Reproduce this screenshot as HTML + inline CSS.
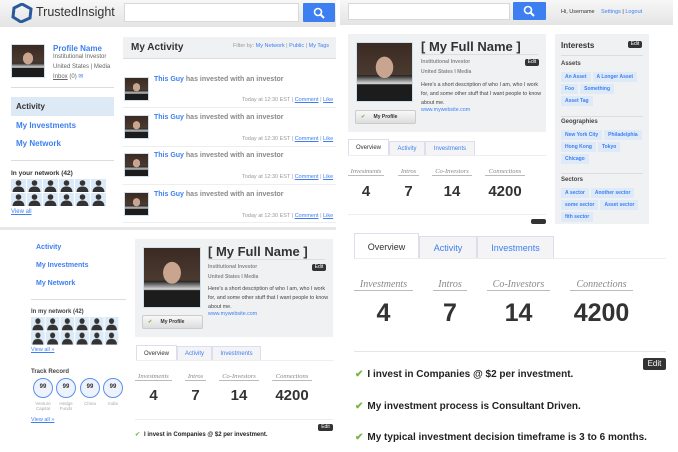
<!DOCTYPE html><html><head><meta charset="utf-8"><style>
*{margin:0;padding:0;box-sizing:border-box}
body{width:678px;height:452px;background:#fff;position:relative;overflow:hidden;font-family:"Liberation Sans",Arial,sans-serif;font-size:7px;color:#666}
.a{position:absolute;white-space:nowrap}
.hdr{background:linear-gradient(#f7f7f7,#e4e4e4)}
.inp{background:#fff;border:1px solid #d8d8d8}
.btn{background:#3d7ff0;border-radius:1px}
.lk{color:#3d7ff0}
.b{font-weight:bold}
.ph{background:radial-gradient(ellipse at 50% 42%,#c9a48e 0 22%,transparent 23%),linear-gradient(180deg,#3a2a22 0,#4a3a30 55%,#222 56%,#ddd 70%,#1c1c1c 72%);border:1px solid #cfe0ef}
.card{background:#f0f1f3}
.line{position:absolute;height:1px;background:#ddd}
.edit{position:absolute;background:#333;color:#fff;font-size:5px;border-radius:2px;text-align:center}
.tag{display:inline-block;background:#dfeaf8;color:#3d7ff0;font-weight:bold;font-size:5px;padding:2px 4px;margin:0 2px 2px 0;height:10px}
.tab{position:absolute;border:1px solid #dde;border-bottom:none;background:#f4f4f6;color:#3d7ff0;text-align:center}
.tab.on{background:#fff;color:#333}
.sl{font-family:"Liberation Serif",serif;font-style:italic;color:#888;border-bottom:1px solid #bbb;text-align:center}
.num{font-weight:bold;color:#333;text-align:center}
.mp{position:absolute;background:linear-gradient(#f8f8f8,#ddd);border:1px solid #ccc;border-radius:2px;font-size:5px;font-weight:bold;color:#333;text-align:center}
.mp:before{content:"✔";color:#7ab648;position:absolute;left:5px}
.ck{color:#7ab648;margin-right:4px}
</style></head><body>
<svg width="0" height="0" style="position:absolute"><defs><pattern id="s" width="16" height="14" patternUnits="userSpaceOnUse"><rect width="15" height="13" fill="#dceaf7"/><circle cx="7.5" cy="4" r="2.8" fill="#333"/><path d="M1.5 13 Q2 7.5 7.5 7.5 Q13 7.5 13.5 13Z" fill="#333"/></pattern></defs></svg>

<!-- TOP LEFT -->
<div class="a hdr" style="left:0;top:0;width:336px;height:27px"></div>
<svg class="a" style="left:11px;top:3px" width="22" height="20"><path d="M11 1 L20 6 L19 15 L10 19 L2 14 L3 5Z" fill="none" stroke="#2a5a9c" stroke-width="3"/></svg>
<div class="a" style="left:36px;top:5px;font-size:12.5px;color:#333">TrustedInsight</div>
<div class="a inp" style="left:124px;top:3px;width:175px;height:19px"></div>
<div class="a btn" style="left:303px;top:3px;width:32px;height:19px"></div>
<svg class="a" style="left:313px;top:7px" width="12" height="12"><circle cx="5" cy="5" r="3.5" stroke="#fff" stroke-width="1.6" fill="none"/><path d="M7.5 7.5L11 11" stroke="#fff" stroke-width="2"/></svg>
<div class="a ph" style="left:11px;top:44px;width:34px;height:34px"></div>
<div class="a lk b" style="left:53px;top:44px;font-size:8px">Profile Name</div>
<div class="a" style="left:53px;top:54px;font-size:6px">Institutional Investor</div>
<div class="a" style="left:53px;top:64px;font-size:6px">United States | Media</div>
<div class="a" style="left:53px;top:73px;font-size:6px"><u>Inbox</u> (0) <span class="lk">✉</span></div>
<div class="line" style="left:11px;top:87px;width:103px"></div>
<div class="a" style="left:11px;top:97px;width:103px;height:19px;background:#dde9f5"></div>
<div class="a b" style="left:16px;top:102px;font-size:8px;color:#333">Activity</div>
<div class="a b lk" style="left:16px;top:121px;font-size:8px">My Investments</div>
<div class="a b lk" style="left:16px;top:139px;font-size:8px">My Network</div>
<div class="line" style="left:11px;top:160px;width:103px"></div>
<div class="a b" style="left:11px;top:170px;font-size:6.5px;color:#333">In your network (42)</div>
<svg class="a" style="left:11px;top:179px" width="96" height="28"><rect width="96" height="28" fill="url(#s)"/></svg>
<div class="a lk" style="left:11px;top:209px;font-size:6px"><u>View all</u></div>
<div class="a card" style="left:123px;top:37px;width:213px;height:22px;border-bottom:1px solid #ddd"></div>
<div class="a b" style="left:131px;top:42px;font-size:10px;color:#333">My Activity</div>
<div class="a" style="left:233px;top:43px;font-size:5.5px;color:#999">Filter by: <span class="lk">My Network</span> | <span class="lk">Public</span> | <span class="lk">My Tags</span></div>
<div class="a ph" style="left:124px;top:77px;width:25px;height:24px"></div>
<div class="a ph" style="left:124px;top:115px;width:25px;height:24px"></div>
<div class="a ph" style="left:124px;top:153px;width:25px;height:24px"></div>
<div class="a ph" style="left:124px;top:192px;width:25px;height:24px"></div>
<div class="a b" style="left:154px;top:76px;font-size:7px;color:#888"><span class="lk">This Guy</span> has invested with an investor</div>
<div class="a b" style="left:154px;top:114px;font-size:7px;color:#888"><span class="lk">This Guy</span> has invested with an investor</div>
<div class="a b" style="left:154px;top:152px;font-size:7px;color:#888"><span class="lk">This Guy</span> has invested with an investor</div>
<div class="a b" style="left:154px;top:191px;font-size:7px;color:#888"><span class="lk">This Guy</span> has invested with an investor</div>
<div class="a" style="left:242px;top:97px;font-size:5.5px;color:#999">Today at 12:30 EST | <u class="lk">Comment</u> | <u class="lk">Like</u></div>
<div class="a" style="left:242px;top:136px;font-size:5.5px;color:#999">Today at 12:30 EST | <u class="lk">Comment</u> | <u class="lk">Like</u></div>
<div class="a" style="left:242px;top:174px;font-size:5.5px;color:#999">Today at 12:30 EST | <u class="lk">Comment</u> | <u class="lk">Like</u></div>
<div class="a" style="left:242px;top:213px;font-size:5.5px;color:#999">Today at 12:30 EST | <u class="lk">Comment</u> | <u class="lk">Like</u></div>
<div class="line" style="left:123px;top:107px;width:213px;background:#eee"></div>
<div class="line" style="left:123px;top:146px;width:213px;background:#eee"></div>
<div class="line" style="left:123px;top:184px;width:213px;background:#eee"></div>
<div class="line" style="left:123px;top:222px;width:213px;background:#eee"></div>
<div class="a" style="left:0;top:227px;width:336px;height:3px;background:#e8e8e8"></div>

<!-- TOP RIGHT -->
<div class="a hdr" style="left:340px;top:0;width:333px;height:25px"></div>
<div class="a inp" style="left:348px;top:3px;width:162px;height:17px"></div>
<div class="a btn" style="left:513px;top:2px;width:33px;height:18px"></div>
<svg class="a" style="left:523px;top:5px" width="12" height="12"><circle cx="5" cy="5" r="3.5" stroke="#fff" stroke-width="1.6" fill="none"/><path d="M7.5 7.5L11 11" stroke="#fff" stroke-width="2"/></svg>
<div class="a" style="left:561px;top:9px;font-size:5.5px;color:#333">Hi, Username</div>
<div class="a lk" style="left:601px;top:9px;font-size:5.5px">Settings <span style="color:#333">|</span> Logout</div>
<div class="a card" style="left:348px;top:34px;width:198px;height:98px"></div>
<div class="a ph" style="left:356px;top:42px;width:57px;height:60px"></div>
<div class="a b" style="left:421px;top:39px;font-size:13px;color:#333">[ My Full Name ]</div>
<div class="line" style="left:421px;top:54px;width:117px"></div>
<div class="a b" style="left:421px;top:59px;font-size:5px;color:#888">Institutional Investor</div>
<div class="a b" style="left:421px;top:69px;font-size:5px;color:#888">United States I Media</div>
<div class="edit" style="left:525px;top:59px;width:14px;height:7px">Edit</div>
<div class="a" style="left:421px;top:81px;font-size:5.3px;color:#444;line-height:9px;white-space:normal;width:125px">Here's a short description of who I am, who I work for, and some other stuff that I want people to know about me.</div>
<div class="a lk" style="left:421px;top:107px;font-size:5.3px">www.mywebsite.com</div>
<div class="mp" style="left:355px;top:110px;width:61px;height:14px;line-height:12px">My Profile</div>
<div class="tab on" style="left:348px;top:139px;width:41px;height:17px;font-size:6px;line-height:17px">Overview</div>
<div class="tab" style="left:389px;top:141px;width:36px;height:15px;font-size:6px;line-height:15px">Activity</div>
<div class="tab" style="left:425px;top:141px;width:50px;height:15px;font-size:6px;line-height:15px">Investments</div>
<div class="line" style="left:348px;top:155px;width:198px;background:#eee"></div>
<div class="a sl" style="left:348px;top:168px;width:36px;font-size:6.5px">Investments</div>
<div class="a sl" style="left:398px;top:168px;width:21px;font-size:6.5px">Intros</div>
<div class="a sl" style="left:432px;top:168px;width:40px;font-size:6.5px">Co-Investors</div>
<div class="a sl" style="left:485px;top:168px;width:40px;font-size:6.5px">Connections</div>
<div class="a num" style="left:348px;top:183px;width:36px;font-size:15px">4</div>
<div class="a num" style="left:398px;top:183px;width:21px;font-size:15px">7</div>
<div class="a num" style="left:432px;top:183px;width:40px;font-size:15px">14</div>
<div class="a num" style="left:485px;top:183px;width:40px;font-size:15px">4200</div>
<div class="line" style="left:348px;top:214px;width:198px;background:#eee"></div>
<div class="edit" style="left:531px;top:219px;width:15px;height:5px"></div>
<div class="a card" style="left:555px;top:34px;width:94px;height:190px"></div>
<div class="a b" style="left:561px;top:41px;font-size:8px;color:#333">Interests</div>
<div class="edit" style="left:628px;top:41px;width:14px;height:7px">Edit</div>
<div class="line" style="left:561px;top:55px;width:82px"></div>
<div class="a b" style="left:561px;top:61px;font-size:6px;color:#444">Assets</div>
<div class="a" style="left:561px;top:72px;width:88px;white-space:normal"><span class="tag">An Asset</span><span class="tag">A Longer Asset</span><span class="tag">Foo</span><span class="tag">Something</span><span class="tag">Asset Tag</span></div>
<div class="line" style="left:561px;top:116px;width:82px"></div>
<div class="a b" style="left:561px;top:119px;font-size:6px;color:#444">Geographies</div>
<div class="a" style="left:561px;top:130px;width:88px;white-space:normal"><span class="tag">New York City</span><span class="tag">Philadelphia</span><span class="tag">Hong Kong</span><span class="tag">Tokyo</span><span class="tag">Chicago</span></div>
<div class="line" style="left:561px;top:173px;width:82px"></div>
<div class="a b" style="left:561px;top:177px;font-size:6px;color:#444">Sectors</div>
<div class="a" style="left:561px;top:188px;width:88px;white-space:normal"><span class="tag">A sector</span><span class="tag">Another sector</span><span class="tag">some sector</span><span class="tag">Asset sector</span><span class="tag">fith sector</span></div>

<!-- BOTTOM LEFT -->
<div class="a b lk" style="left:36px;top:244px;font-size:7px">Activity</div>
<div class="a b lk" style="left:36px;top:262px;font-size:7px">My Investments</div>
<div class="a b lk" style="left:36px;top:280px;font-size:7px">My Network</div>
<div class="line" style="left:31px;top:299px;width:95px"></div>
<div class="a b" style="left:31px;top:309px;font-size:6px;color:#444">In my network (42)</div>
<svg class="a" style="left:31px;top:317px" width="88" height="29"><rect width="96" height="28" fill="url(#s)" transform="scale(0.92 1.02)"/></svg>
<div class="a lk" style="left:31px;top:347px;font-size:5.5px"><u>View all »</u></div>
<div class="a b" style="left:31px;top:369px;font-size:6px;color:#444">Track Record</div>
<div class="a" style="left:33px;top:378px;width:20px;height:20px;border:1.5px solid #5a8ff0;border-radius:50%;background:#eef3fb;font-size:6px;font-weight:bold;color:#333;text-align:center;line-height:17px">99</div>
<div class="a" style="left:56px;top:378px;width:20px;height:20px;border:1.5px solid #5a8ff0;border-radius:50%;background:#eef3fb;font-size:6px;font-weight:bold;color:#333;text-align:center;line-height:17px">99</div>
<div class="a" style="left:80px;top:378px;width:20px;height:20px;border:1.5px solid #5a8ff0;border-radius:50%;background:#eef3fb;font-size:6px;font-weight:bold;color:#333;text-align:center;line-height:17px">99</div>
<div class="a" style="left:103px;top:378px;width:20px;height:20px;border:1.5px solid #5a8ff0;border-radius:50%;background:#eef3fb;font-size:6px;font-weight:bold;color:#333;text-align:center;line-height:17px">99</div>
<div class="a" style="left:31px;top:401px;width:24px;text-align:center;font-size:4.5px;color:#aaa;line-height:5px;white-space:normal">Venture Capital</div>
<div class="a" style="left:54px;top:401px;width:24px;text-align:center;font-size:4.5px;color:#aaa;line-height:5px;white-space:normal">Hedge Funds</div>
<div class="a" style="left:78px;top:401px;width:24px;text-align:center;font-size:4.5px;color:#aaa">China</div>
<div class="a" style="left:101px;top:401px;width:24px;text-align:center;font-size:4.5px;color:#aaa">India</div>
<div class="a lk" style="left:31px;top:417px;font-size:5.5px"><u>View all »</u></div>
<div class="a card" style="left:135px;top:239px;width:198px;height:98px"></div>
<div class="a ph" style="left:143px;top:247px;width:58px;height:61px"></div>
<div class="a b" style="left:208px;top:244px;font-size:13px;color:#333">[ My Full Name ]</div>
<div class="line" style="left:208px;top:259px;width:117px"></div>
<div class="a b" style="left:208px;top:264px;font-size:5px;color:#888">Institutional Investor</div>
<div class="a b" style="left:208px;top:274px;font-size:5px;color:#888">United States I Media</div>
<div class="edit" style="left:312px;top:264px;width:14px;height:7px">Edit</div>
<div class="a" style="left:208px;top:285px;font-size:5.3px;color:#444;line-height:9px;white-space:normal;width:125px">Here's a short description of who I am, who I work for, and some other stuff that I want people to know about me.</div>
<div class="a lk" style="left:208px;top:311px;font-size:5.3px">www.mywebsite.com</div>
<div class="mp" style="left:142px;top:315px;width:61px;height:14px;line-height:12px">My Profile</div>
<div class="tab on" style="left:136px;top:345px;width:41px;height:16px;font-size:6px;line-height:16px">Overview</div>
<div class="tab" style="left:177px;top:346px;width:35px;height:15px;font-size:6px;line-height:15px">Activity</div>
<div class="tab" style="left:212px;top:346px;width:49px;height:15px;font-size:6px;line-height:15px">Investments</div>
<div class="line" style="left:136px;top:360px;width:197px;background:#eee"></div>
<div class="a sl" style="left:135px;top:373px;width:37px;font-size:6.5px">Investments</div>
<div class="a sl" style="left:185px;top:373px;width:21px;font-size:6.5px">Intros</div>
<div class="a sl" style="left:219px;top:373px;width:40px;font-size:6.5px">Co-Investors</div>
<div class="a sl" style="left:272px;top:373px;width:40px;font-size:6.5px">Connections</div>
<div class="a num" style="left:135px;top:387px;width:37px;font-size:15px">4</div>
<div class="a num" style="left:185px;top:387px;width:21px;font-size:15px">7</div>
<div class="a num" style="left:219px;top:387px;width:40px;font-size:15px">14</div>
<div class="a num" style="left:272px;top:387px;width:40px;font-size:15px">4200</div>
<div class="line" style="left:135px;top:419px;width:198px;background:#eee"></div>
<div class="edit" style="left:318px;top:424px;width:15px;height:7px">Edit</div>
<div class="a b" style="left:135px;top:431px;font-size:6px;color:#222"><span class="ck">✔</span>I invest in Companies @ $2 per investment.</div>

<!-- BOTTOM RIGHT -->
<div class="tab on" style="left:354px;top:233px;width:65px;height:26px;font-size:9px;line-height:26px">Overview</div>
<div class="tab" style="left:419px;top:236px;width:58px;height:23px;font-size:9px;line-height:23px">Activity</div>
<div class="tab" style="left:477px;top:236px;width:77px;height:23px;font-size:9px;line-height:23px">Investments</div>
<div class="line" style="left:354px;top:258px;width:312px;background:#eee"></div>
<div class="a sl" style="left:354px;top:279px;width:59px;font-size:10px">Investments</div>
<div class="a sl" style="left:433px;top:279px;width:34px;font-size:10px">Intros</div>
<div class="a sl" style="left:487px;top:279px;width:63px;font-size:10px">Co-Investors</div>
<div class="a sl" style="left:570px;top:279px;width:63px;font-size:10px">Connections</div>
<div class="a num" style="left:354px;top:299px;width:59px;font-size:25px">4</div>
<div class="a num" style="left:433px;top:299px;width:34px;font-size:25px">7</div>
<div class="a num" style="left:487px;top:299px;width:63px;font-size:25px">14</div>
<div class="a num" style="left:570px;top:299px;width:63px;font-size:25px">4200</div>
<div class="line" style="left:354px;top:351px;width:312px;background:#e6e6e6"></div>
<div class="edit" style="left:643px;top:358px;width:23px;height:12px;font-size:8px;line-height:12px">Edit</div>
<div class="a b" style="left:355px;top:369px;font-size:10px;color:#222"><span class="ck">✔</span>I invest in Companies @ $2 per investment.</div>
<div class="a b" style="left:355px;top:401px;font-size:10px;color:#222"><span class="ck">✔</span>My investment process is Consultant Driven.</div>
<div class="a b" style="left:355px;top:432px;font-size:10px;color:#222"><span class="ck">✔</span>My typical investment decision timeframe is 3 to 6 months.</div>
</body></html>
